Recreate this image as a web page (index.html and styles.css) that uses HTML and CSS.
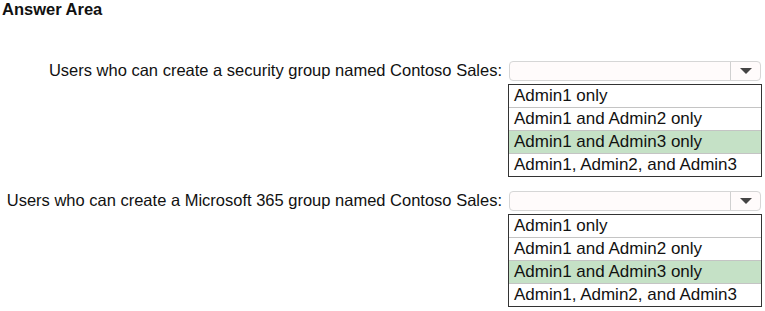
FILE: index.html
```html
<!DOCTYPE html>
<html lang="en">
<head>
    <meta charset="UTF-8">
    <title>Answer Area</title>
    <link rel="stylesheet" href="styles.css">
</head>
<body>
    <h1 class="title">Answer Area</h1>
    <main class="questions">
        <!-- Pregunta 1 -->
        <div class="question">
            <div class="label">Users who can create a security group named Contoso Sales:</div>
            <div class="answer">
                <div class="select"><span class="arrow"></span></div>
                <ul class="options">
                    <li>Admin1 only</li>
                    <li>Admin1 and Admin2 only</li>
                    <li class="selected">Admin1 and Admin3 only</li>
                    <li>Admin1, Admin2, and Admin3</li>
                </ul>
            </div>
        </div>
        <!-- Pregunta 2 -->
        <div class="question">
            <div class="label">Users who can create a Microsoft 365 group named Contoso Sales:</div>
            <div class="answer">
                <div class="select"><span class="arrow"></span></div>
                <ul class="options">
                    <li>Admin1 only</li>
                    <li>Admin1 and Admin2 only</li>
                    <li class="selected">Admin1 and Admin3 only</li>
                    <li>Admin1, Admin2, and Admin3</li>
                </ul>
            </div>
        </div>
    </main>
</body>
</html>
```
FILE: styles.css
```css
/* General */
body {
    margin: 0;
    padding: 0 2px;
    font-family: "Liberation Sans", Arial, sans-serif;
    color: #111;
    background: #fff;
}

.title {
    font-size: 16.5px;
    font-weight: bold;
    margin: 0;
    line-height: 18px;
}

.questions {
    display: flex;
    flex-direction: column;
    gap: 14px;
    margin-top: 43px;
}

.question {
    display: grid;
    grid-template-columns: 500px 254px;
    column-gap: 6px;
}

.label {
    text-align: right;
    font-size: 16.5px;
    line-height: 19px;
    white-space: nowrap;
}

.answer {
    display: flex;
    flex-direction: column;
    gap: 3px;
}

/* Select cerrado */
.select {
    height: 18px;
    margin: 0 1px;
    border: 1px solid #d6d6d6;
    border-radius: 4px;
    background: #fffbfb;
    display: flex;
    justify-content: flex-end;
}

.arrow {
    width: 29px;
    border-left: 1px solid #d0d0d0;
    display: flex;
    align-items: center;
    justify-content: center;
}

.arrow::after {
    content: "";
    border-left: 6px solid transparent;
    border-right: 6px solid transparent;
    border-top: 6px solid #444;
}

/* Lista de opciones */
.options {
    list-style: none;
    margin: 0;
    padding: 0;
    border: 1px solid #333;
}

.options li {
    font-size: 17px;
    line-height: 22px;
    padding-left: 5px;
    border-top: 1px solid #c4c4c4;
}

.options li:first-child {
    border-top: none;
}

.options li.selected {
    background: #c5e1c6;
}
```
